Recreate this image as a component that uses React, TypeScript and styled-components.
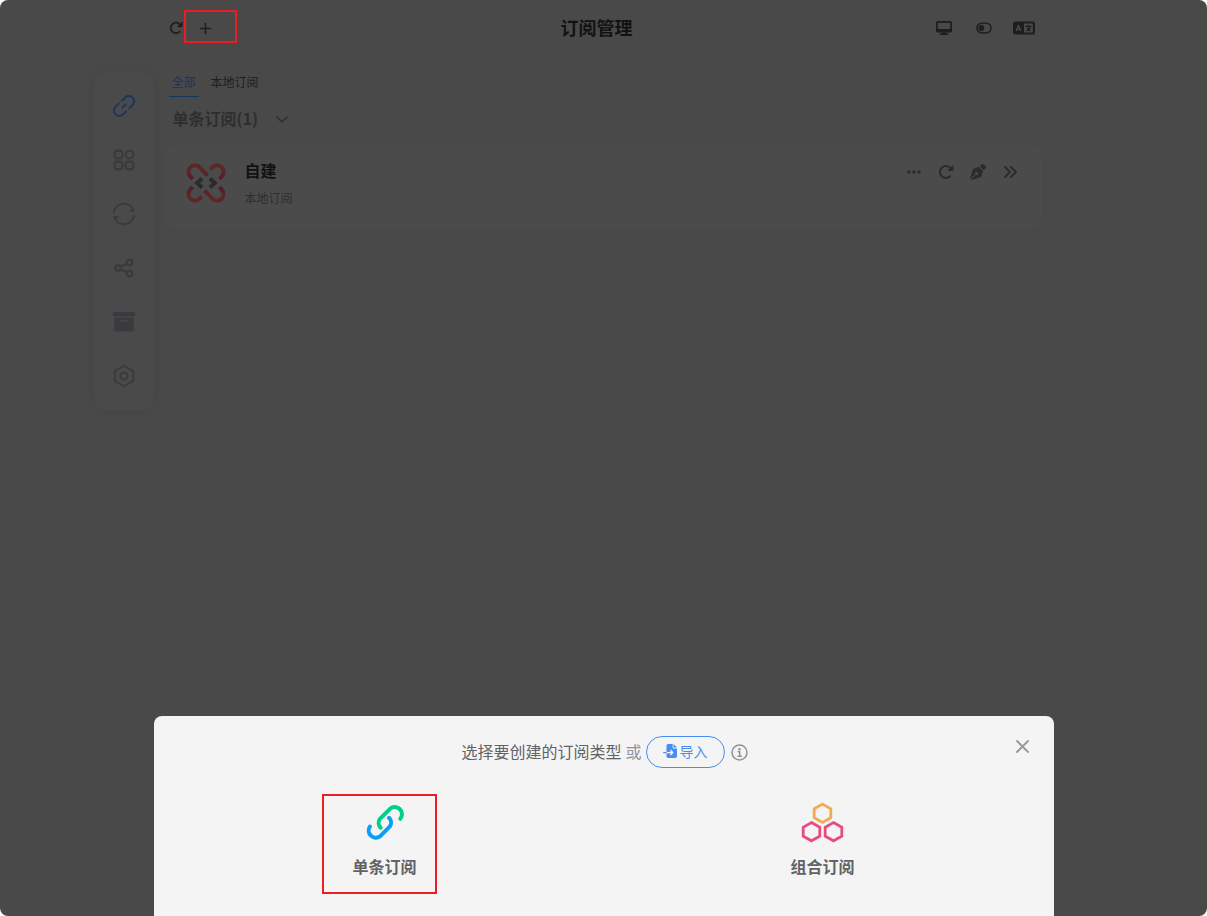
import React from "react";
import styled, { createGlobalStyle, css } from "styled-components";
import {
  FaAnglesRight,
  FaArrowRotateRight,
  FaDesktop,
  FaEllipsis,
  FaFileImport,
  FaLanguage,
  FaPenNib,
  FaRotateRight,
} from "react-icons/fa6";

const GlobalStyle = createGlobalStyle`
  *, *::before, *::after { box-sizing: border-box; }
  body {
    margin: 0;
    background: #fff;
    font-family: "Noto Sans CJK SC", "Noto Sans", sans-serif;
  }
  button { font: inherit; color: inherit; }
  h1, h2, h3, p { margin: 0; }
`;

const Page = styled.div`
  min-height: 100vh;
  border-radius: 8px;
  background: #494949;
  color: #121212;
  display: grid;
  grid-template-columns: minmax(60px, 1fr) minmax(0, 900px) minmax(0, 1fr);
  grid-template-rows: 53px 1fr;
`;

const IconButton = styled.button`
  display: flex;
  align-items: center;
  justify-content: center;
  padding: 0;
  border: 0;
  background: none;
  cursor: pointer;
`;

const Header = styled.header`
  grid-column: 2;
  margin-right: 14px;
  display: grid;
  grid-template-columns: 1fr auto 1fr;
  align-items: center;
`;

const HeaderTools = styled.div<{ $end?: boolean }>`
  display: flex;
  align-items: center;
  color: #1e1e1e;

  ${IconButton} {
    padding-top: 3px;
  }

  ${(p) =>
    p.$end
      ? css`
          justify-content: flex-end;
          gap: 16px;
          padding-right: 4px;

          ${IconButton} {
            width: 24px;
          }
        `
      : css`
          gap: 1px;
          padding-left: 15px;
        `}
`;

const AddButton = styled(IconButton)`
  width: 53px;
  height: 33px;
  border: 2px solid #ed1c24;
  justify-content: flex-start;
  padding-left: 13px;
`;

const Title = styled.h1`
  font-size: 18px;
  line-height: 24px;
  font-weight: 700;
`;

const Sidebar = styled.nav`
  grid-column: 1;
  grid-row: 2;
  justify-self: end;
  align-self: start;
  width: 60px;
  margin-top: 19px;
  padding: 7px 0;
  border-radius: 12px;
  background: #4a4a4a;
  box-shadow: 0 0 12px rgba(0, 0, 0, 0.05);
`;

const NavLink = styled.a<{ $active?: boolean }>`
  display: flex;
  align-items: center;
  justify-content: center;
  height: 54px;
  color: ${(p) => (p.$active ? "#183461" : "#3a3b3f")};
`;

const Content = styled.main`
  grid-column: 2;
  grid-row: 2;
  padding: 19px 12px 0;
`;

const Tabs = styled.div`
  display: flex;
  gap: 9px;
  padding-left: 3px;
`;

const Tab = styled.button<{ $active?: boolean }>`
  height: 25px;
  padding: 0 3px 4px;
  border: 0;
  border-bottom: 1px solid ${(p) => (p.$active ? "#183461" : "transparent")};
  background: none;
  color: ${(p) => (p.$active ? "#183461" : "#1e1e1e")};
  font-size: 12px;
  line-height: 20px;
  cursor: pointer;
`;

const SectionToggle = styled.button`
  display: flex;
  align-items: center;
  gap: 18px;
  height: 44px;
  margin-bottom: 4px;
  padding: 0 7px;
  border: 0;
  background: none;
  color: #2e2e2f;
  font-size: 16px;
  line-height: 24px;
  font-weight: 700;
  cursor: pointer;
`;

const SectionLabel = styled.span`
  padding-bottom: 2px;
`;

const Card = styled.article`
  display: flex;
  align-items: flex-start;
  min-height: 84px;
  padding: 13px 24px 12px 20px;
  border-radius: 12px;
  background: #4b4b4b;
`;

const CardLogo = styled.svg`
  flex: none;
  margin: 5px 19px 0 0;
`;

const CardText = styled.div`
  flex: 1;
`;

const CardName = styled.h3`
  font-size: 16px;
  line-height: 24px;
  font-weight: 700;
`;

const CardNote = styled.p`
  margin-top: 4px;
  font-size: 12px;
  line-height: 24px;
  color: #2e2e2f;
`;

const CardActions = styled.div`
  display: flex;
  gap: 16px;
  padding-top: 6px;
  color: #2a2b2c;

  ${IconButton} {
    width: 16px;
    height: 16px;
  }
`;

const Sheet = styled.section`
  position: fixed;
  left: 0;
  right: 0;
  bottom: 0;
  width: 100%;
  max-width: 900px;
  min-height: 200px;
  margin: 0 auto;
  padding: 20px 12px 22px;
  border-radius: 8px 8px 0 0;
  background: #f4f4f4;
  color: #606266;
`;

const SheetHeader = styled.div`
  display: flex;
  align-items: center;
  justify-content: center;
  gap: 4px;
  height: 32px;
  padding-left: 2px;
`;

const SheetTitle = styled.h2`
  padding-bottom: 2px;
  font-size: 16px;
  line-height: 24px;
  font-weight: 400;
`;

const OrText = styled.span`
  padding-bottom: 2px;
  font-size: 16px;
  line-height: 24px;
  color: #909399;
`;

const ImportButton = styled.button`
  display: flex;
  align-items: center;
  justify-content: center;
  gap: 3px;
  width: 79px;
  height: 32px;
  padding: 0 0 3px;
  border: 1px solid #478ef2;
  border-radius: 16px;
  background: none;
  color: #478ef2;
  font-size: 14px;
  line-height: 20px;
  cursor: pointer;
`;

const InfoButton = styled(IconButton)`
  margin-left: 2px;
  color: #909399;
`;

const CloseButton = styled(IconButton)`
  position: absolute;
  top: 19px;
  right: 20px;
  width: 22px;
  height: 22px;
  color: #999;
`;

const Options = styled.div`
  display: grid;
  grid-template-columns: 1fr 1fr;
  justify-items: center;
  margin-top: 33px;
`;

const Option = styled.button<{ $marked?: boolean }>`
  position: relative;
  display: flex;
  flex-direction: column;
  align-items: center;
  gap: 11px;
  padding: 0;
  border: 0;
  background: none;
  font-size: 16px;
  line-height: 24px;
  font-weight: 700;
  cursor: pointer;

  ${(p) =>
    p.$marked &&
    css`
      &::before {
        content: "";
        position: absolute;
        inset: -7px -20px -16px -30px;
        border: 2px solid #ed1c24;
      }
    `}
`;

const line = {
  fill: "none",
  stroke: "currentColor",
  strokeLinecap: "round" as const,
  strokeLinejoin: "round" as const,
};

const LinkIcon = () => (
  <svg width="24" height="24" viewBox="0 0 24 24" {...line} strokeWidth="1.9">
    <path d="M10 6.600l3-3a5.300 5.300 0 0 1 7.500 7.500l-3.300 3.300" />
    <path d="M14 17.400l-3 3a5.300 5.300 0 0 1-7.500-7.500l3.300-3.300" />
    <path d="M10.300 13.700l3.400-3.400" />
  </svg>
);

const GridIcon = () => (
  <svg width="22" height="22" viewBox="0 0 22 22" {...line} strokeWidth="2.200">
    <rect x="1.600" y="1.600" width="7.800" height="7.800" rx="2.600" />
    <circle cx="16.500" cy="5.500" r="3.900" />
    <rect x="1.600" y="12.600" width="7.800" height="7.800" rx="2.600" />
    <rect x="12.600" y="12.600" width="7.800" height="7.800" rx="2.600" />
  </svg>
);

const SyncIcon = () => (
  <svg width="24" height="24" viewBox="0 0 24 24" {...line} strokeWidth="2">
    <path d="M1.900 10.200A10.200 10.200 0 0 1 21.400 8.200" />
    <path d="M22.100 13.800A10.200 10.200 0 0 1 2.600 15.800" />
    <path d="M22.800 10.600L16.600 9.200L20.600 6.600Z" fill="currentColor" stroke="none" />
    <path d="M1.200 13.400L7.400 14.800L3.400 17.400Z" fill="currentColor" stroke="none" />
  </svg>
);

const ShareIcon = () => (
  <svg width="22" height="22" viewBox="0 0 22 22" {...line} strokeWidth="2.400">
    <circle cx="5" cy="11" r="2.800" />
    <circle cx="16.500" cy="5.400" r="2.800" />
    <circle cx="16.500" cy="16.600" r="2.800" />
    <path d="M7.600 9.700L14 6.600M7.600 12.300L14 15.400" />
  </svg>
);

const ArchiveIcon = () => (
  <svg width="22" height="20" viewBox="0 0 22 20" fill="currentColor">
    <rect width="22" height="4.600" rx="1" />
    <path
      fillRule="evenodd"
      d="M1.300 5.700H20.700V17.500A2 2 0 0 1 18.700 19.500H3.300A2 2 0 0 1 1.300 17.500ZM7.500 8.200A.6.6 0 0 0 7.500 9.500H14.500A.6.6 0 0 0 14.500 8.200Z"
    />
  </svg>
);

const SettingsIcon = () => (
  <svg width="22" height="24" viewBox="0 0 22 24" {...line} strokeWidth="2">
    <path d="M11 1.800L20.200 7V17L11 22.200L1.800 17V7Z" />
    <circle cx="11" cy="12" r="3.500" />
  </svg>
);

const PlusIcon = () => (
  <svg width="13" height="13" viewBox="0 0 13 13" {...line} strokeWidth="1.600">
    <path d="M6.500 1.500V11.500M1.500 6.500H11.500" />
  </svg>
);

const ToggleIcon = () => (
  <svg width="16" height="12" viewBox="0 0 16 12" {...line} strokeWidth="1.600">
    <rect x="1" y="1.200" width="14" height="9.600" rx="4.800" />
    <circle cx="5.400" cy="6" r="2.900" fill="currentColor" stroke="none" />
  </svg>
);

const ChevronIcon = () => (
  <svg width="12" height="8" viewBox="0 0 12 8" {...line} strokeWidth="1.600">
    <path d="M1 2L6 7L11 2" />
  </svg>
);

const InfoIcon = () => (
  <svg width="17" height="17" viewBox="0 0 17 17" {...line} strokeWidth="1.500">
    <circle cx="8.500" cy="8.500" r="7.500" />
    <circle cx="8.500" cy="5.200" r="1.200" fill="currentColor" stroke="none" />
    <path d="M7.200 7.800H8.700V12M7 12.200H10.300" />
  </svg>
);

const CloseIcon = () => (
  <svg width="13" height="13" viewBox="0 0 13 13" {...line} strokeWidth="1.900">
    <path d="M1 1L12 12M12 1L1 12" />
  </svg>
);

const KnotLogo = () => (
  <CardLogo width="40" height="40" viewBox="0 0 40 40" {...line} strokeWidth="4" strokeLinecap="butt">
    <defs>
      <linearGradient id="knot" x1="0" y1="0" x2="0" y2="1">
        <stop offset="0.4" stopColor="#5b2828" />
        <stop offset="1" stopColor="#541a2e" />
      </linearGradient>
      <linearGradient id="knotLow" x1="0" y1="1" x2="0" y2="0">
        <stop offset="0.4" stopColor="#5b2828" />
        <stop offset="1" stopColor="#541a2e" />
      </linearGradient>
    </defs>
    <path stroke="url(#knot)" d="M6.500 16L4.400 13.500A6.500 6.500 0 0 1 13.500 4.200L21.500 12.300" />
    <path stroke="url(#knot)" d="M24 6.500L26.500 4.200A6.500 6.500 0 0 1 35.700 13.500L33.500 16" />
    <path stroke="url(#knotLow)" d="M6.500 24L4.400 26.500A6.500 6.500 0 0 0 13.500 35.800L16 33.500" />
    <path stroke="url(#knotLow)" d="M18.500 27.700L26.500 35.800A6.500 6.500 0 0 0 35.700 26.500L33.500 24" />
    <path stroke="#2b2b2b" d="M16 15.500L11.200 20L16 24.500M24 15.500L28.800 20L24 24.500" strokeLinejoin="miter" />
  </CardLogo>
);

const ChainLogo = () => (
  <svg width="42" height="42" viewBox="0 0 42 42" {...line} strokeWidth="4">
    <path stroke="#00cf8b" d="M17.700 26.700A6.700 6.700 0 0 1 17 17.800L27 7.800A7.200 7.200 0 0 1 37.300 17.800" />
    <path stroke="#0a9ef5" d="M26 16.800A6.700 6.700 0 0 1 26.700 25.700L17 35.400A7.200 7.200 0 0 1 6.900 25.500" />
  </svg>
);

const HexLogo = () => (
  <svg width="44" height="42" viewBox="0 0 44 42" {...line} strokeWidth="2.800" strokeLinejoin="miter">
    <path stroke="#f7a94f" d="M22.500 3.100L30.800 7.800V16.800L22.500 21.400L14.200 16.800V7.800Z" />
    <path stroke="#e84b80" d="M11.500 21.500L19.800 26.200V35.200L11.500 39.800L3.200 35.200V26.200Z" />
    <path stroke="#e84b80" d="M33.500 21.500L41.800 26.200V35.200L33.500 39.800L25.200 35.200V26.200Z" />
  </svg>
);

const navItems = [
  { label: "订阅", icon: <LinkIcon />, active: true },
  { label: "组合", icon: <GridIcon /> },
  { label: "同步", icon: <SyncIcon /> },
  { label: "分享", icon: <ShareIcon /> },
  { label: "归档", icon: <ArchiveIcon /> },
  { label: "设置", icon: <SettingsIcon /> },
];

export default function App() {
  return (
    <>
      <GlobalStyle />
      <Page>
        <Header>
          <HeaderTools>
            <IconButton aria-label="刷新">
              <FaArrowRotateRight size={14} />
            </IconButton>
            <AddButton aria-label="新建">
              <PlusIcon />
            </AddButton>
          </HeaderTools>
          <Title>订阅管理</Title>
          <HeaderTools $end>
            <IconButton aria-label="外观">
              <FaDesktop size={16} />
            </IconButton>
            <IconButton aria-label="开关">
              <ToggleIcon />
            </IconButton>
            <IconButton aria-label="语言">
              <FaLanguage size={22} />
            </IconButton>
          </HeaderTools>
        </Header>

        <Sidebar aria-label="主导航">
          {navItems.map((item) => (
            <NavLink key={item.label} href="#" aria-label={item.label} $active={item.active}>
              {item.icon}
            </NavLink>
          ))}
        </Sidebar>

        <Content>
          <Tabs>
            <Tab $active>全部</Tab>
            <Tab>本地订阅</Tab>
          </Tabs>
          <SectionToggle>
            <SectionLabel>单条订阅(1)</SectionLabel>
            <ChevronIcon />
          </SectionToggle>
          <Card>
            <KnotLogo />
            <CardText>
              <CardName>自建</CardName>
              <CardNote>本地订阅</CardNote>
            </CardText>
            <CardActions>
              <IconButton aria-label="更多">
                <FaEllipsis size={16} />
              </IconButton>
              <IconButton aria-label="刷新订阅">
                <FaRotateRight size={16} />
              </IconButton>
              <IconButton aria-label="编辑">
                <FaPenNib size={16} />
              </IconButton>
              <IconButton aria-label="展开">
                <FaAnglesRight size={16} />
              </IconButton>
            </CardActions>
          </Card>
        </Content>
      </Page>

      <Sheet role="dialog" aria-labelledby="sheet-title">
        <SheetHeader>
          <SheetTitle id="sheet-title">选择要创建的订阅类型</SheetTitle>
          <OrText>或</OrText>
          <ImportButton>
            <FaFileImport size={14} />
            导入
          </ImportButton>
          <InfoButton aria-label="说明">
            <InfoIcon />
          </InfoButton>
        </SheetHeader>
        <CloseButton aria-label="关闭">
          <CloseIcon />
        </CloseButton>
        <Options>
          <Option $marked>
            <ChainLogo />
            单条订阅
          </Option>
          <Option>
            <HexLogo />
            组合订阅
          </Option>
        </Options>
      </Sheet>
    </>
  );
}
